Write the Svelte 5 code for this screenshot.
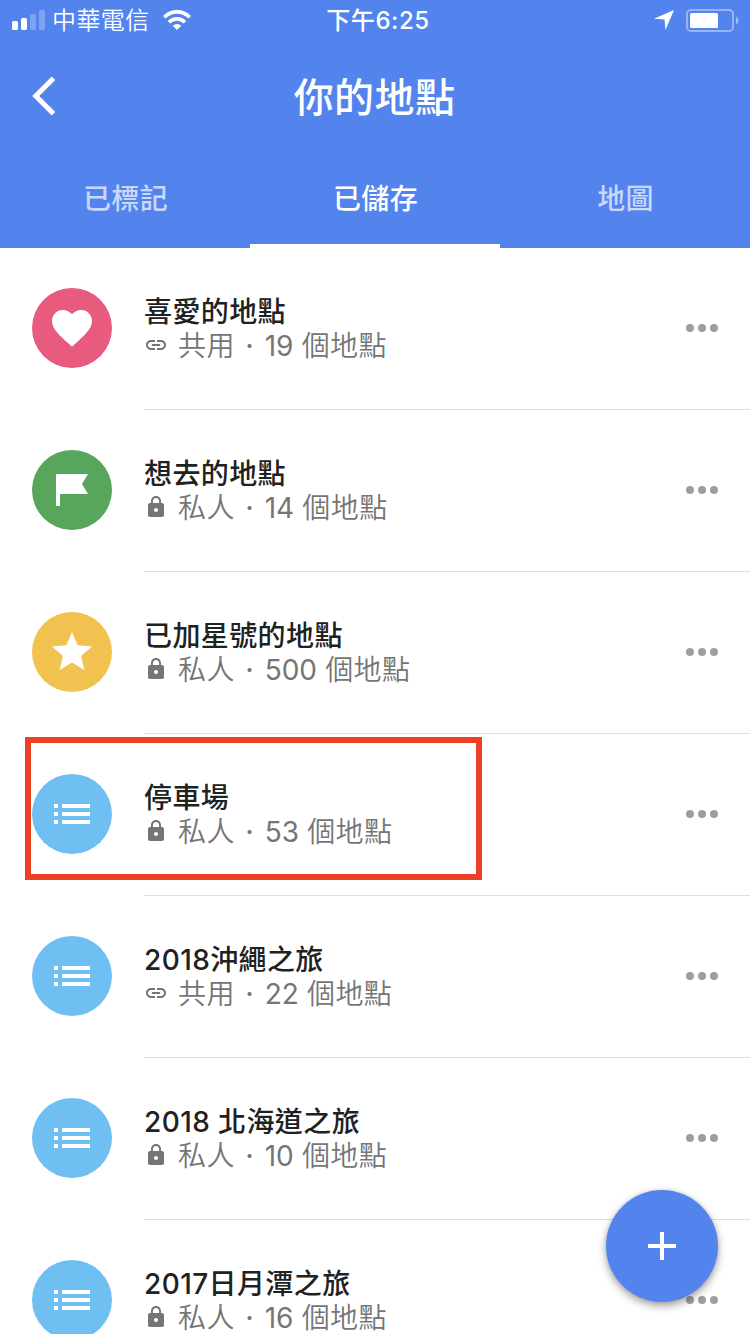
<script>
   // Saved lists shown in the active tab
   let places = [
      { name: '喜愛的地點', icon: 'heart', color: '#e85b7e', shared: true, count: 19 },
      { name: '想去的地點', icon: 'flag', color: '#58a55c', shared: false, count: 14 },
      { name: '已加星號的地點', icon: 'star', color: '#f1c24f', shared: false, count: 500 },
      { name: '停車場', icon: 'list', color: '#70bff2', shared: false, count: 53, marked: true },
      { name: '2018沖繩之旅', icon: 'list', color: '#70bff2', shared: true, count: 22 },
      { name: '2018 北海道之旅', icon: 'list', color: '#70bff2', shared: false, count: 10 },
      { name: '2017日月潭之旅', icon: 'list', color: '#70bff2', shared: false, count: 16 }
   ];

   let tabs = ['已標記', '已儲存', '地圖'];
   let active = 1;

   // 24x24 glyphs, drawn at 48px inside the round avatar
   const glyphs = {
      heart: 'M12 21.35l-1.45-1.32C5.4 15.36 2 12.28 2 8.5 2 5.42 4.42 3 7.5 3c1.74 0 3.41.81 4.5 2.09C13.09 3.81 14.76 3 16.5 3 19.58 3 22 5.42 22 8.5c0 3.78-3.4 6.86-8.55 11.54L12 21.35z',
      flag: 'M4 4h16l-3 5 3 5H6v6H4z',
      star: 'M12 17.27L18.18 21l-1.64-7.03L22 9.24l-7.19-.61L12 2 9.19 8.63 2 9.24l5.46 4.73L5.82 21z',
      list: 'M3 7h2v2H3zM3 11h2v2H3zM3 15h2v2H3zM7 7h14v2H7zM7 11h14v2H7zM7 15h14v2H7z'
   };
</script>

<div class="screen">
   <header>
      <div class="status">
         <div class="side">
            <svg class="signal" width="34" height="20" viewBox="0 0 34 20" fill="#fff">
               <rect x="0" y="11" width="6" height="9" rx="1.5" />
               <rect x="9" y="8" width="6" height="12" rx="1.5" />
               <rect x="18" y="4" width="6" height="16" rx="1.5" opacity=".25" />
               <rect x="27" y="0" width="6" height="20" rx="1.5" opacity=".25" />
            </svg>
            <span class="carrier">中華電信</span>
            <svg class="wifi" width="28" height="20" viewBox="0 0 28 20">
               <g fill="none" stroke="#fff" stroke-width="3.7">
                  <path d="M1.3 7.2a18 18 0 0 1 25.4 0" />
                  <path d="M6 12.2a11.4 11.4 0 0 1 16 0" />
               </g>
               <path fill="#fff" d="M14 20l-4.3-4.2a6.2 6.2 0 0 1 8.6 0z" />
            </svg>
         </div>
         <span class="time">下午6:25</span>
         <div class="side right">
            <svg width="20" height="20" viewBox="0 0 20 20" fill="#fff">
               <path d="M20 0L11.5 20l-1-10.5L0 8.8z" />
            </svg>
            <svg class="battery" width="53" height="23" viewBox="0 0 53 23">
               <rect x="1" y="1" width="46" height="21" rx="4" fill="none" stroke="#fff" stroke-width="2" opacity=".4" />
               <rect x="4" y="4" width="28" height="15" rx="1.5" fill="#fff" />
               <path d="M50 7.5a4.5 4.5 0 0 1 0 8z" fill="#fff" opacity=".45" />
            </svg>
         </div>
      </div>

      <div class="bar">
         <button class="back" aria-label="返回">
            <svg width="24" height="40" viewBox="0 0 24 40" fill="none" stroke="#fff" stroke-width="5">
               <path d="M21.5 2.2L3.7 20l17.8 17.8" />
            </svg>
         </button>
         <h1>你的地點</h1>
      </div>

      <nav>
         {#each tabs as tab, i}
            <button class="tab" class:active={i === active} on:click={() => (active = i)}>{tab}</button>
         {/each}
      </nav>
   </header>

   <ul>
      {#each places as place}
         <li>
            <div class="avatar" style="background: {place.color}">
               <svg width="48" height="48" viewBox="0 0 24 24" fill="#fff">
                  <path d={glyphs[place.icon]} />
               </svg>
            </div>
            <div class="body">
               <div class="text">
                  <div class="name">{place.name}</div>
                  <div class="meta">
                     <svg width="24" height="24" viewBox="0 0 24 24" fill="#757575">
                        {#if place.shared}
                           <path d="M3.9 12c0-1.71 1.39-3.1 3.1-3.1h4V7H7c-2.76 0-5 2.24-5 5s2.24 5 5 5h4v-1.9H7c-1.71 0-3.1-1.39-3.1-3.1zM8 13h8v-2H8v2zm9-6h-4v1.9h4c1.71 0 3.1 1.39 3.1 3.1s-1.39 3.1-3.1 3.1h-4V17h4c2.76 0 5-2.24 5-5s-2.24-5-5-5z" />
                        {:else}
                           <path d="M18 8h-1V6c0-2.76-2.24-5-5-5S7 3.24 7 6v2H6c-1.1 0-2 .9-2 2v10c0 1.1.9 2 2 2h12c1.1 0 2-.9 2-2V10c0-1.1-.9-2-2-2zm-6 9c-1.1 0-2-.9-2-2s.9-2 2-2 2 .9 2 2-.9 2-2 2zm3.1-9H8.9V6c0-1.71 1.39-3.1 3.1-3.1s3.1 1.39 3.1 3.1v2z" />
                        {/if}
                     </svg>
                     <div class="details">
                        <span>{place.shared ? '共用' : '私人'}</span>
                        <span class="dot">·</span>
                        <span><span class="count">{place.count}</span> 個地點</span>
                     </div>
                  </div>
               </div>
               <button class="more" aria-label="更多">
                  <svg width="32" height="8" viewBox="0 0 32 8" fill="#9e9e9e">
                     <circle cx="4" cy="4" r="4" />
                     <circle cx="16" cy="4" r="4" />
                     <circle cx="28" cy="4" r="4" />
                  </svg>
               </button>
            </div>
            {#if place.marked}
               <div class="marker"></div>
            {/if}
         </li>
      {/each}
   </ul>

   <button class="fab" aria-label="新增">
      <svg width="28" height="28" viewBox="0 0 28 28" fill="#fff">
         <path d="M12 0h4v12h12v4H16v12h-4V16H0v-4h12z" />
      </svg>
   </button>
</div>

<style>
   .screen {
      position: relative;
      width: 750px;
      height: 1334px;
      overflow: hidden;
      background: #fff;
      font-family: Inter, 'Noto Sans CJK TC', sans-serif;
   }

   button {
      padding: 0;
      border: none;
      background: none;
      font: inherit;
      color: inherit;
      cursor: pointer;
   }

   svg {
      display: block;
      flex: none;
   }

   header {
      height: 248px;
      background: #5384ed;
      color: #fff;
   }

   .status {
      display: grid;
      grid-template-columns: 1fr auto 1fr;
      align-items: center;
      height: 40px;
      padding: 0 11px 0 12px;
      font-size: 24px;
      line-height: 38px;
   }

   .side {
      display: flex;
      align-items: center;
   }

   .right {
      justify-content: flex-end;
      gap: 12px;
   }

   .carrier {
      margin: 0 13px 0 6px;
      padding-top: 2px;
      font-weight: 350;
      letter-spacing: 0.4px;
   }

   .time {
      padding: 2px 0 0 5px;
      font-weight: 500;
      letter-spacing: 0.6px;
   }

   .bar {
      display: grid;
      grid-template-columns: 1fr auto 1fr;
      align-items: center;
      height: 112px;
      padding: 0 32px;
   }

   h1 {
      margin: 0;
      padding: 3px 1px 0 0;
      font-size: 40px;
      font-weight: 500;
      line-height: 60px;
      letter-spacing: 0.4px;
   }

   .back {
      justify-self: start;
   }

   nav {
      display: flex;
      height: 96px;
   }

   .tab {
      flex: 1;
      box-sizing: border-box;
      padding: 0 0 2px 1px;
      border-bottom: 4px solid transparent;
      font-size: 28px;
      font-weight: 500;
      letter-spacing: 0.3px;
      color: rgba(255, 255, 255, 0.7);
   }

   .tab.active {
      border-color: #fff;
      color: #fff;
   }

   ul {
      margin: 0;
      padding: 0;
      list-style: none;
   }

   li {
      position: relative;
      display: flex;
      gap: 32px;
      height: 162px;
      padding-left: 32px;
   }

   .avatar {
      display: flex;
      align-items: center;
      justify-content: center;
      flex: none;
      width: 80px;
      height: 80px;
      margin-top: 40px;
      border-radius: 50%;
   }

   .body {
      display: flex;
      flex: 1;
      justify-content: space-between;
      box-sizing: border-box;
      padding: 47px 32px 0 0;
      border-bottom: 1px solid #dedede;
   }

   .name {
      font-size: 28px;
      font-weight: 500;
      line-height: 34px;
      letter-spacing: 0.4px;
      color: #212121;
      white-space: nowrap;
   }

   .meta {
      display: flex;
      align-items: flex-start;
      gap: 10px;
      height: 34px;
      font-size: 28px;
      font-weight: 350;
      line-height: 34px;
      letter-spacing: 0.4px;
      color: #757575;
      white-space: nowrap;
   }

   .meta svg {
      margin-top: 4px;
   }

   .details {
      display: flex;
   }

   .dot {
      width: 30px;
      font-weight: 500;
      text-align: center;
   }

   .count {
      font-weight: 400;
      letter-spacing: -0.1px;
   }

   .more {
      align-self: flex-start;
      margin-top: 29px;
   }

   /* highlight frame laid over the row */
   .marker {
      position: absolute;
      top: 3px;
      left: 25px;
      box-sizing: border-box;
      width: 457px;
      height: 143px;
      border: 6px solid #eb4025;
   }

   .fab {
      position: absolute;
      right: 32px;
      bottom: 32px;
      display: flex;
      align-items: center;
      justify-content: center;
      width: 112px;
      height: 112px;
      border-radius: 50%;
      background: #5384ed;
      box-shadow: 0 4px 8px rgba(0, 0, 0, 0.35), 0 0 4px rgba(0, 0, 0, 0.12);
   }
</style>
